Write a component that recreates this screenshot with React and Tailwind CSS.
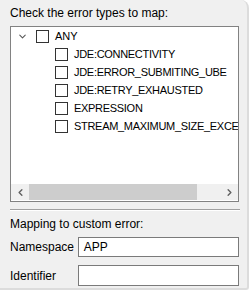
import { ChevronDown, ChevronLeft, ChevronRight } from "lucide-react";

const items = [
  "JDE:CONNECTIVITY",
  "JDE:ERROR_SUBMITING_UBE",
  "JDE:RETRY_EXHAUSTED",
  "EXPRESSION",
  "STREAM_MAXIMUM_SIZE_EXCEEDED",
];

function Box() {
  return <span className="w-[13px] h-[13px] border border-[#333333] bg-white shrink-0" />;
}

export default function App() {
  return (
    <div className="w-[251px] h-[291px] bg-white" style={{ fontFamily: '"Liberation Sans", Arial, sans-serif' }}>
      <div className="w-[249px] h-[290px] bg-[#f0f0f0] border-r-2 border-b-2 border-[#dcdcdc] rounded-tr-[8px] rounded-br-[3px] pl-[10px] pr-[8px] flex flex-col text-black">
        <div className="pt-[5px] h-[21px] text-[12px] leading-[16px]">Check the error types to map:</div>

        <div className="mt-[5px] h-[176px] border border-[#828282] bg-white flex flex-col">
          <div className="flex-1 overflow-hidden text-[11px] leading-[18px]">
            <div className="flex items-center h-[18px] whitespace-nowrap">
              <ChevronDown className="ml-[6px] w-[11px] h-[11px] text-[#555]" strokeWidth={2.2} />
              <span className="ml-[8px] flex"><Box /></span>
              <span className="ml-[6px]">ANY</span>
            </div>
            {items.map((t) => (
              <div key={t} className="flex items-center h-[18px] whitespace-nowrap pl-[44px]">
                <Box />
                <span className="ml-[6px] tracking-[-0.3px]">{t}</span>
              </div>
            ))}
          </div>
          <div className="h-[16px] flex items-stretch bg-[#f0f0f0] mb-[1px]">
            <div className="w-[18px] flex items-center justify-center">
              <ChevronLeft className="w-[11px] h-[11px] text-[#606060]" strokeWidth={3} />
            </div>
            <div className="w-[168px] bg-[#cdcdcd]" />
            <div className="flex-1" />
            <div className="w-[18px] flex items-center justify-center">
              <ChevronRight className="w-[11px] h-[11px] text-[#606060]" strokeWidth={3} />
            </div>
          </div>
        </div>

        <div className="mt-[7px] h-[1px] w-[230px] bg-[#a0a0a0]" />
        <div className="h-[1px] w-[230px] bg-white" />

        <div className="mt-[5px] text-[12px] leading-[16px]">Mapping to custom error:</div>

        <div className="mt-[5px] flex items-center h-[20px] text-[12px]">
          <span className="w-[68px]">Namespace</span>
          <div className="w-[162px] h-[20px] border border-[#7a7a7a] bg-white px-[5px] leading-[18px]">APP</div>
        </div>
        <div className="mt-[8px] flex items-center h-[21px] text-[12px]">
          <span className="w-[68px]">Identifier</span>
          <div className="w-[162px] h-[21px] border border-[#7a7a7a] bg-white" />
        </div>
      </div>
    </div>
  );
}
